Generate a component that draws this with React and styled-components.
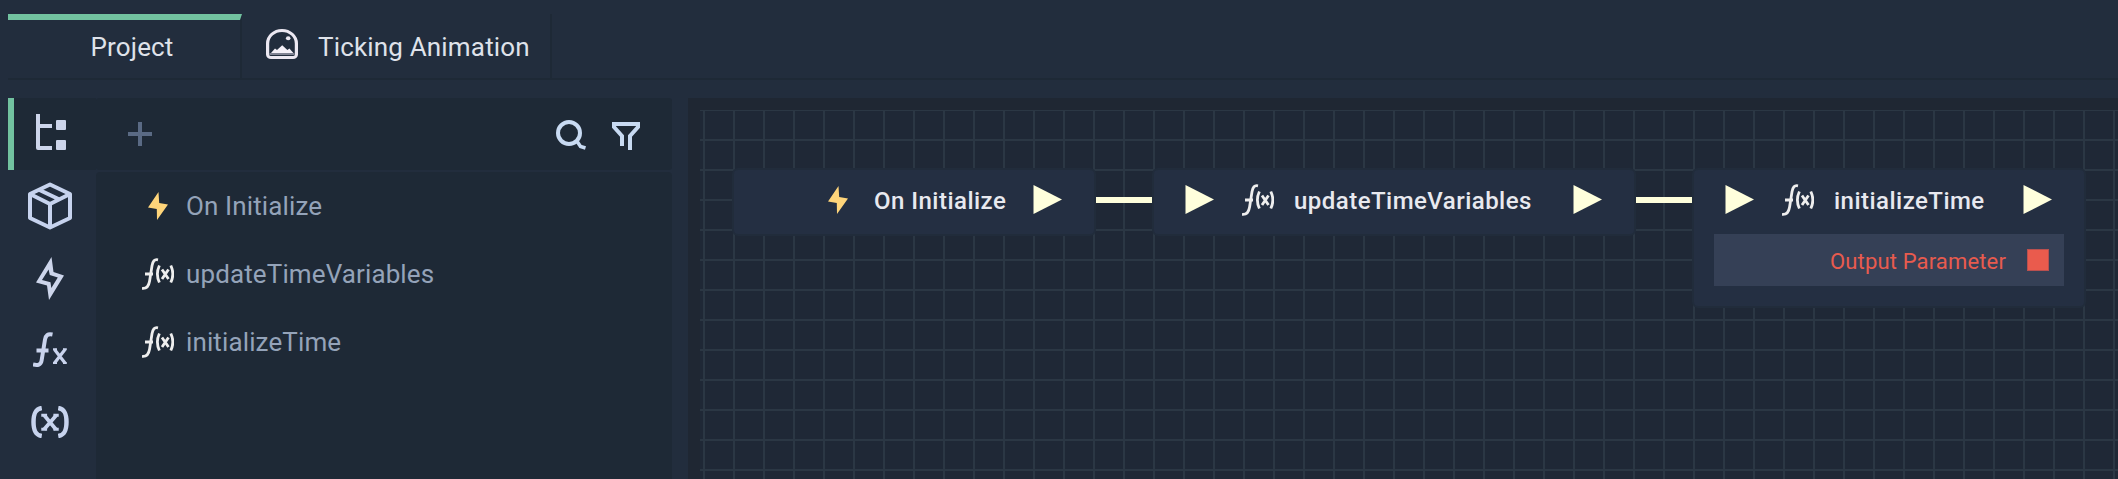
import React from "react";
import styled, { createGlobalStyle } from "styled-components";

const Global = createGlobalStyle`
  * { box-sizing: border-box; }
  body { margin: 0; background: #222d3d; font-family: Roboto, "Liberation Sans", sans-serif; overflow: hidden; }
`;

const Shell = styled.div`
  display: flex;
  flex-direction: column;
  width: 100%;
  height: 479px;
  padding: 14px 0 0 8px;
  background: #222d3d;
`;
const TabBar = styled.div`
  display: flex;
  flex: none;
  height: 66px;
  border-bottom: 2px solid #1e2936;
`;
const Tab = styled.div`
  display: flex;
  align-items: center;
  justify-content: ${(p) => (p.$active ? "center" : "flex-start")};
  gap: 20px;
  width: ${(p) => p.$width}px;
  padding: ${(p) => (p.$active ? "0 0 4px 16px" : "2px 0 0 24px")};
  border-top: ${(p) => (p.$active ? "6px solid #72c2a0" : "0")};
  border-right: 2px solid #1e2936;
  color: #dfe2ea;
  font-size: 26px;
  letter-spacing: 0.17px;
  white-space: nowrap;

  svg { margin-bottom: 6px; }
`;
const Workspace = styled.div`
  display: flex;
  flex: 1;
  min-height: 0;
  margin-top: 18px;
`;
const ActivityBar = styled.nav`
  flex: none;
  width: 88px;
`;
const Activity = styled.div`
  display: flex;
  align-items: center;
  justify-content: center;
  height: 72px;
  padding-right: ${(p) => (p.$active ? 8 : 4)}px;
  padding-bottom: ${(p) => (p.$active ? 4 : 0)}px;
  background: ${(p) => (p.$active ? "#1e2936" : "transparent")};
  border-left: ${(p) => (p.$active ? "6px solid #72c2a0" : "0")};
`;
const Explorer = styled.aside`
  display: flex;
  flex-direction: column;
  flex: none;
  gap: 2px;
  width: 576px;
`;
const Toolbar = styled.div`
  display: flex;
  align-items: center;
  height: 72px;
  padding: 0 32px;
  background: #1e2936;
  border-radius: 3px;
`;
const ToolbarTools = styled.div`
  display: flex;
  align-items: flex-end;
  gap: 26px;
  margin: 2px 0 0 auto;
`;
const List = styled.div`
  flex: 1;
  background: #1e2936;
  border-radius: 4px 4px 0 0;
`;
const ListRow = styled.div`
  display: flex;
  align-items: center;
  gap: 12px;
  height: 68px;
  padding-left: 46px;
  color: #94a3b9;
  font-size: 26px;
  letter-spacing: 0.12px;
`;
const Canvas = styled.main`
  flex: 1;
  margin-left: 16px;
  padding: 12px 0 0 12px;
  background: #1f2733;
`;
const Grid = styled.div`
  position: relative;
  height: 100%;
  background-color: #1f2836;
  background-image:
    linear-gradient(90deg, #2b3744 2px, transparent 2px),
    linear-gradient(#2b3744 2px, transparent 2px);
  background-size: 30px 30px;
  background-position: 3px 0, 0 -1px;
`;
const Node = styled.section`
  position: absolute;
  left: ${(p) => p.$x}px;
  top: 58px;
  width: ${(p) => p.$w}px;
  height: ${(p) => p.$h}px;
  background: #242f42;
  border: 2px solid #212c3b;
  border-radius: 6px;
`;
const NodeHead = styled.header`
  display: flex;
  align-items: center;
  height: 64px;
  padding: 0 32px 5px 31px;
  color: #e8e9ef;
  font-size: 24px;
  font-weight: 500;
  letter-spacing: 0.47px;
`;
const NodeName = styled.span`
  padding-top: 2px;
`;
const NodeIcon = styled.span`
  display: flex;
  margin-left: ${(p) => p.$before}px;
  margin-right: ${(p) => p.$after}px;
`;
const PortOut = styled.span`
  display: flex;
  margin-left: auto;
`;
const Param = styled.div`
  display: flex;
  align-items: center;
  justify-content: flex-end;
  gap: 21px;
  height: 52px;
  margin: 0 20px;
  padding-right: 15px;
  background: #354056;
  color: #e85b4e;
  font-size: 22px;
  letter-spacing: 0.15px;
`;
const ParamName = styled.span`
  padding-top: 2px;
`;
const ParamPort = styled.span`
  width: 22px;
  height: 22px;
  background: #ea5b4d;
  border: 1px solid #b9504f;
`;
const Link = styled.div`
  position: absolute;
  left: ${(p) => p.$x}px;
  top: 87px;
  width: 56px;
  height: 6px;
  background: #ffffdc;
`;

const SceneIcon = () => (
  <svg width="32" height="30" viewBox="0 0 32 33" preserveAspectRatio="none">
    <path d="M1.6 16a14.4 14.4 0 0 1 28.8 0v12a3.4 3.4 0 0 1-3.4 3.4H5A3.4 3.4 0 0 1 1.6 28Z" fill="none" stroke="#ece8f2" strokeWidth="3.200" />
    <circle cx="22.200" cy="10.200" r="2.300" fill="#ece8f2" />
    <path d="M5 26.500l4-5 2 1.500 5.200-5 5.200 5 2-1.500 4 5Z" fill="#f4f0f8" />
    <path d="M3.500 26.500h25v2h-25Z" fill="#8b8d9d" />
  </svg>
);
const TreeIcon = () => (
  <svg width="30" height="36" viewBox="0 0 30 36" fill="#cdd5eb">
    <path d="M0 0h4v10h12v4H4v18h12v4H2a2 2 0 0 1-2-2Z" />
    <rect x="20" y="6" width="10" height="10" rx="1" />
    <rect x="20" y="26" width="10" height="10" rx="1" />
  </svg>
);
const BoxIcon = () => (
  <svg width="44" height="48" viewBox="0 0 44 48" fill="none" stroke="#c7d3ee" strokeWidth="4" strokeLinejoin="round">
    <path d="M22 2.500 42 12v24L22 45.500 2 36V12Z" />
    <path d="M2 12l20 10 20-10M22 22v23M11.500 8l20 9.500" />
  </svg>
);
const BoltOutlineIcon = () => (
  <svg width="28" height="43" viewBox="0 0 28 43">
    <path d="M15.500 0 17.500 15 28 18.500 13 43 11 28.500 0 25.500ZM12.600 12.500 6 23l8.500 2.300.8 5.700 6.500-10.500-8-2.500Z" fill="#cdd5eb" fillRule="evenodd" />
  </svg>
);
const FxIcon = () => (
  <svg width="35" height="36" viewBox="0 0 35 36" fill="none" stroke="#c9d3ed" strokeWidth="4">
    <path d="M19.500 2.500c-5-1-6.700.7-7.500 5L8.600 28.500c-.7 4.300-3.800 5.300-8.600 4M3.500 18.500h12" />
    <path d="M21.500 17.500l10.500 13.500M32 17.500 21.500 31" strokeWidth="3.200" />
    <path d="M20 17.200h4M30 17.200h3.800M20 31h4M30 31h3.800" strokeWidth="2" />
  </svg>
);
const VarIcon = () => (
  <svg width="40" height="32" viewBox="0 0 40 33" fill="none" stroke="#c7d3ee">
    <path d="M11.500 2C5.500 3 3 7 3 16.500S5.500 30 11.500 31M28.500 2c6 1 8.500 5 8.500 14.500S34.500 30 28.500 31" strokeWidth="4.600" />
    <path d="M14 9.500 26 24M26.500 9.500 14 24" strokeWidth="3.800" />
    <path d="M11 9.500h6M23.500 9.500H29M11 24h6M23.500 24H29" strokeWidth="3" />
  </svg>
);
const PlusIcon = () => (
  <svg width="24" height="24" viewBox="0 0 24 24" fill="#5a6a84">
    <path d="M10 0h4v10h10v4H14v10h-4V14H0v-4h10Z" />
  </svg>
);
const SearchIcon = () => (
  <svg width="30" height="30" viewBox="0 0 30 30" fill="none" stroke="#c8daf2" strokeWidth="4">
    <circle cx="13" cy="13" r="11" />
    <path d="M20.500 20.500 24.500 26.500 29.500 28" strokeWidth="3.500" />
  </svg>
);
const FilterIcon = () => (
  <svg width="28" height="28" viewBox="0 0 28 28" fill="none" stroke="#c8daf2" strokeWidth="4">
    <path d="M10 24V14L2 5V2h24v3l-8 9v14" />
  </svg>
);
const BoltIcon = () => (
  <svg width="20" height="28" viewBox="0 0 20 28" fill="#ffd57a">
    <path d="M10.500 0 0 15.500l8.800 1.400L9 28 20 12.500l-8.800-1.400Z" />
  </svg>
);
const FunctionIcon = () => (
  <svg width="32" height="32" viewBox="0 0 32 32" fill="none" stroke="#eeeeee" strokeWidth="2.800">
    <path d="M16 1.800c-3.600-.8-5.200 1.200-6 6L7.600 23C6.800 28 5 31 0 30.400M3 16h8" />
    <path d="M17.400 7.500c-2.600 5.500-2.600 11.500 0 17M28.800 7.500c2.600 5.500 2.600 11.500 0 17" />
    <path d="M20 11.500l6.500 9.500M26.500 11.500 20 21" />
  </svg>
);
const PlayIcon = () => (
  <svg width="29" height="29" viewBox="0 0 29 29">
    <path d="M.5 0 29 14.500.500 29Z" fill="#ffffdc" />
  </svg>
);

const activities = [TreeIcon, BoxIcon, BoltOutlineIcon, FxIcon, VarIcon];

export default function App() {
  return (
    <Shell>
      <Global />
      <TabBar>
        <Tab $active $width={234}>Project</Tab>
        <Tab $width={310}><SceneIcon />Ticking Animation</Tab>
      </TabBar>
      <Workspace>
        <ActivityBar>
          {activities.map((Icon, i) => (
            <Activity key={i} $active={i === 0}><Icon /></Activity>
          ))}
        </ActivityBar>
        <Explorer>
          <Toolbar>
            <PlusIcon />
            <ToolbarTools><SearchIcon /><FilterIcon /></ToolbarTools>
          </Toolbar>
          <List>
            <ListRow><NodeIcon $before={6} $after={6}><BoltIcon /></NodeIcon>On Initialize</ListRow>
            <ListRow><FunctionIcon />updateTimeVariables</ListRow>
            <ListRow><FunctionIcon />initializeTime</ListRow>
          </List>
        </Explorer>
        <Canvas>
          <Grid>
            <Node $x={32} $w={364} $h={68}>
              <NodeHead>
                <NodeIcon $before={63} $after={26}><BoltIcon /></NodeIcon>
                <NodeName>On Initialize</NodeName>
                <PortOut><PlayIcon /></PortOut>
              </NodeHead>
            </Node>
            <Link $x={396} />
            <Node $x={452} $w={484} $h={68}>
              <NodeHead>
                <PlayIcon />
                <NodeIcon $before={28} $after={20}><FunctionIcon /></NodeIcon>
                <NodeName>updateTimeVariables</NodeName>
                <PortOut><PlayIcon /></PortOut>
              </NodeHead>
            </Node>
            <Link $x={936} />
            <Node $x={992} $w={394} $h={140}>
              <NodeHead>
                <PlayIcon />
                <NodeIcon $before={28} $after={20}><FunctionIcon /></NodeIcon>
                <NodeName>initializeTime</NodeName>
                <PortOut><PlayIcon /></PortOut>
              </NodeHead>
              <Param><ParamName>Output Parameter</ParamName><ParamPort /></Param>
            </Node>
          </Grid>
        </Canvas>
      </Workspace>
    </Shell>
  );
}
